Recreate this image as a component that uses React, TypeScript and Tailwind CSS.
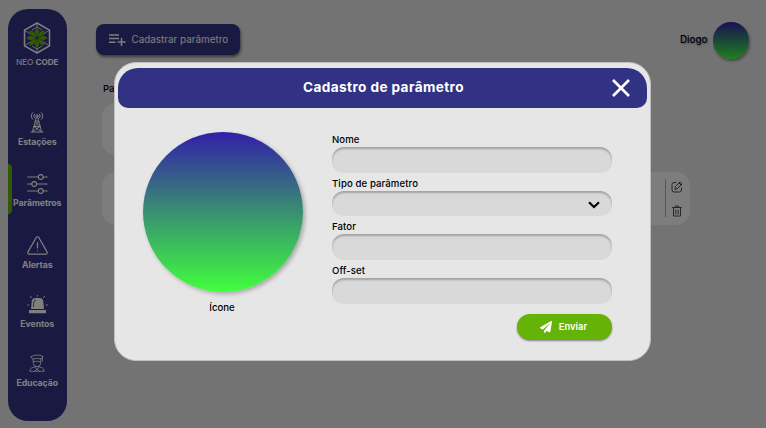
import type { ReactNode } from "react";

const stroke = { fill: "none", stroke: "currentColor", strokeLinecap: "round" as const, strokeLinejoin: "round" as const };

function Logo() {
  return (
    <svg className="h-8 w-7" viewBox="0 0 28 32">
      <g fill="none" stroke="#fff" strokeLinejoin="round">
        <path strokeWidth="1.5" d="M14 1 26.5 8.2V23.8L14 31 1.5 23.8V8.2Z" />
        <path strokeWidth=".8" d="M14 1v5M14 26v5M1.5 8.2l6 3.8M26.5 8.2l-6 3.8M1.5 23.8l6-3.8M26.5 23.8l-6-3.8M9 8l5-3 5 3M9 24l5 3 5-3" />
      </g>
      <g fill="#65b307">
        {[0, 90, 180, 270].map((a) => (
          <path key={a} transform={`rotate(${a} 14 16)`} d="M14 15.5 11.6 9.5 14 5.2l2.4 4.3Z" />
        ))}
        {[45, 135, 225, 315].map((a) => (
          <path key={a} transform={`rotate(${a} 14 16)`} d="M14 14.8Q10 9.5 14 5.2q4 4.3 0 9.6Z" />
        ))}
      </g>
    </svg>
  );
}

function TowerIcon() {
  return (
    <svg className="h-[21px] w-4" viewBox="0 0 16 21" {...stroke} strokeWidth="1">
      <circle cx="8" cy="4" r="1.2" />
      <path d="M5.5 6a3 3 0 0 1 0-4M10.5 6a3 3 0 0 0 0-4M3.6 7.3a5 5 0 0 1 0-6.6M12.4 7.3a5 5 0 0 0 0-6.6M7.3 5.5 3.5 19.5M8.7 5.5l3.8 14M6.4 9h3.2M5 14.5h6M6.2 9.5l4.5 5M9.8 9.5l-4.5 5M5 14.5l7 5M11 14.5l-7 5M2 20h12" />
    </svg>
  );
}

function SlidersIcon() {
  return (
    <svg className="h-5 w-[21px]" viewBox="0 0 21 20" {...stroke} strokeWidth="1.1">
      <path d="M.7 3h10.5M16.2 3h4M.7 10h4M9.7 10h10.5M.7 17h10.5M16.2 17h4" />
      <circle cx="13.7" cy="3" r="2.4" />
      <circle cx="7.2" cy="10" r="2.4" />
      <circle cx="13.7" cy="17" r="2.4" />
    </svg>
  );
}

function AlertIcon() {
  return (
    <svg className="h-[19px] w-[21px]" viewBox="0 0 21 19" {...stroke} strokeWidth="1.2">
      <path d="M9.2 1.5a1.5 1.5 0 0 1 2.6 0l8.2 14.4a1.5 1.5 0 0 1-1.3 2.3H2.3A1.5 1.5 0 0 1 1 15.9ZM10.5 6.5V12M10.5 14.8v.2" />
    </svg>
  );
}

function SirenIcon() {
  return (
    <svg className="h-[19px] w-[21px]" viewBox="0 0 21 19">
      <path fill="currentColor" d="M4 14 4.8 6Q5.2 3 8.5 3h4q3.3 0 3.7 3l.8 8ZM2 15h17v3.2H2Z" />
      <path d="M9 5q-1.8 0-2.1 2l-.6 5" fill="none" stroke="#323285" strokeWidth=".8" />
      <path {...stroke} strokeWidth="1" d="M10.5.5v.7M3.5 1.5l1 1.2M17.5 1.5l-1 1.2M.7 10h1M19.3 10h1" />
    </svg>
  );
}

function StudentIcon() {
  return (
    <svg className="h-[18px] w-4" viewBox="0 0 16 18" {...stroke} strokeWidth=".8">
      <path d="M2 2.5Q8-.5 14 2.5L12 5Q8 3.5 4 5ZM13.5 3v4M4.2 5v3.2q0 4.3 3.8 4.3t3.8-4.3V5M4.5 7.5q2 1 3.5-.5 1.5 1.5 3.5.5M6.3 12v1.2L8 16l1.7-2.8V12M6 12.8 2.8 13.8Q1 14.5.8 17.3h14.4Q15 14.5 13.2 13.8L10 12.8M6 17l2-2 2 2" />
    </svg>
  );
}

function NavItem({ label, children, active = false }: { label: string; children: ReactNode; active?: boolean }) {
  return (
    <a className="relative flex h-[60px] w-full flex-col items-center text-white">
      {active && <span className="absolute top-[-9px] left-0 h-[50px] w-[3.5px] rounded-r bg-[#65b307]" />}
      <span className="flex h-[21px] items-center">{children}</span>
      <span className="mt-[3px] text-[8.7px] leading-3 font-bold tracking-[-0.05px] whitespace-nowrap">{label}</span>
    </a>
  );
}

function Sidebar() {
  return (
    <aside className="mt-[9px] ml-2 flex h-[412px] w-[58.5px] shrink-0 flex-col items-center rounded-[20px] bg-[#323285]">
      <div className="mt-[13px]"><Logo /></div>
      <div className="mt-[2px] text-[8.2px] leading-3 tracking-[-0.05px] whitespace-nowrap text-white">NEO <b>CODE</b></div>
      <nav className="mt-[44px] flex w-full flex-col">
        <NavItem label="Estações"><TowerIcon /></NavItem>
        <div className="mt-[1px]"><NavItem label="Parâmetros" active><SlidersIcon /></NavItem></div>
        <div className="mt-[2px]"><NavItem label="Alertas"><AlertIcon /></NavItem></div>
        <div className="-mt-[1.5px]"><NavItem label="Eventos"><SirenIcon /></NavItem></div>
        <div className="-mt-[1px]"><NavItem label="Educação"><StudentIcon /></NavItem></div>
      </nav>
    </aside>
  );
}

function Field({ label, select = false }: { label: string; select?: boolean }) {
  return (
    <label className="flex h-[43.7px] flex-col">
      <span className="h-[14px] text-[9.6px] leading-[14px] font-medium tracking-[0.1px]">{label}</span>
      <span className="flex h-[25.5px] w-[280px] items-center justify-end rounded-[12px] bg-[#d9d9d9] pr-3 shadow-[inset_0_2px_2px_rgba(0,0,0,0.25)]">
        {select && (
          <svg className="mt-[3px] h-2 w-3" viewBox="0 0 12 8" fill="none" stroke="black" strokeWidth="2.2"><path d="m1 1.3 5 4.8 5-4.8" /></svg>
        )}
      </span>
    </label>
  );
}

function ParameterModal() {
  return (
    <section className="absolute top-[62px] left-[114px] flex h-[299px] w-[537px] flex-col rounded-[22px] border border-[#c0c0c0] bg-[#e6e6e6] px-[3px] pt-[5px]">
      <header className="flex h-10 shrink-0 items-center rounded-t-[20px] rounded-b-[10px] bg-[#323285] text-white">
        <h1 className="-mt-[2px] flex-1 pl-[37px] text-center text-[13.6px] leading-5 font-bold tracking-[0.4px]">Cadastro de parâmetro</h1>
        <svg className="mr-[17px] h-[18px] w-[18px]" viewBox="0 0 18 18" stroke="white" strokeWidth="2.6"><path d="m1 1 16 16M17 1 1 17" /></svg>
      </header>
      <div className="flex pl-[25px]">
        <div className="flex w-40 flex-col items-center pt-6">
          <div className="size-40 shrink-0 rounded-full bg-linear-to-b/srgb from-[#321fa8] to-[#40ff3c] shadow-[2px_2px_4px_rgba(0,0,0,0.28)]" />
          <span className="mt-[8px] -ml-[2px] text-[9.6px] leading-[15px] font-medium">Ícone</span>
        </div>
        <form className="ml-[29px] w-[280px] pt-[25px]">
          <Field label="Nome" />
          <Field label="Tipo de parâmetro" select />
          <Field label="Fator" />
          <Field label="Off-set" />
          <button type="button" className="mt-[6.3px] ml-auto flex h-[25.5px] w-[95px] items-center justify-center gap-[7px] rounded-full bg-[#65b307] pr-[2px] text-[9.4px] font-semibold text-white shadow-[0_1px_2px_rgba(0,0,0,0.45)]">
            <svg className="h-3 w-3" viewBox="0 0 512 512" fill="currentColor"><path d="M476 3 12 271c-18 10-16 35 2 43l107 45L409 105c6-5 13 3 9 9L176 408v80c0 24 28 33 42 16l64-78 126 53c14 6 31-3 33-19l71-432c4-20-18-35-36-25Z" /></svg>
            Enviar
          </button>
        </form>
      </div>
    </section>
  );
}

export default function App() {
  return (
    <div className="relative flex h-[428px] w-[766px] overflow-hidden bg-[#e6e6e6] font-['Inter','Noto_Sans',sans-serif] text-black">
      <Sidebar />
      <main className="flex flex-1 flex-col pl-[29.5px]">
        <div className="mt-[22px] flex items-center justify-between pr-[17px]">
          <button className="mt-[-1px] flex h-[31px] w-[144px] items-center rounded-[8px] bg-[#323285] pl-[13px] text-[9.9px] whitespace-nowrap text-white shadow-[1px_2px_3px_rgba(0,0,0,0.5)]">
            <svg className="mr-[5.5px] h-3 w-[17px] shrink-0" viewBox="0 0 17 12" fill="none" stroke="currentColor" strokeWidth="1.5"><path d="M0 1h10M0 4.6h10M0 8.2h6.5M12.5 4v8M8.5 8h8" /></svg>
            Cadastrar parâmetro
          </button>
          <div className="flex items-center gap-[5px]">
            <span className="text-[9.8px] font-medium [text-shadow:1px_1px_2px_rgba(0,0,0,0.4)]">Diogo</span>
            <span className="size-[36.5px] rounded-full bg-linear-to-b/srgb from-[#321fa8] to-[#40ff3c] shadow-[1px_2px_3px_rgba(0,0,0,0.4)]" />
          </div>
        </div>
        <div className="mt-[22px] ml-[7px] text-[9.6px] leading-[15px] font-medium">Parâmetros</div>
        <div className="mt-[7px] ml-[6px] h-[52px] w-[420px] rounded-[14px] bg-[#fafafa]" />
        <div className="mt-[17px] ml-[6px] flex h-[53px] w-[588px] items-center justify-end rounded-[14px] bg-[#fafafa] pr-[7px]">
          <span className="mr-[5px] h-[38px] w-px bg-[#aaa]" />
          <div className="mt-[2px] flex flex-col items-center gap-[12px] text-[#505050]">
            <svg className="h-3 w-3" viewBox="0 0 12 12" {...stroke} strokeWidth="1"><path d="M5 1.5H3Q1 1.5 1 3.5V9q0 2 2 2h5.5q2 0 2-2V7M4 8l.5-2.5L9 1l2 2-4.5 4.5ZM8 2l2 2" /></svg>
            <svg className="h-3 w-3" viewBox="0 0 12 12" {...stroke} strokeWidth="1"><path d="M1.5 2.5h9M4.5 2.5V1h3v1.5M2.5 3v8h7V3M4.8 5v4M7.2 5v4" /></svg>
          </div>
        </div>
      </main>
      <div className="absolute inset-0 bg-black/50" />
      <ParameterModal />
    </div>
  );
}
